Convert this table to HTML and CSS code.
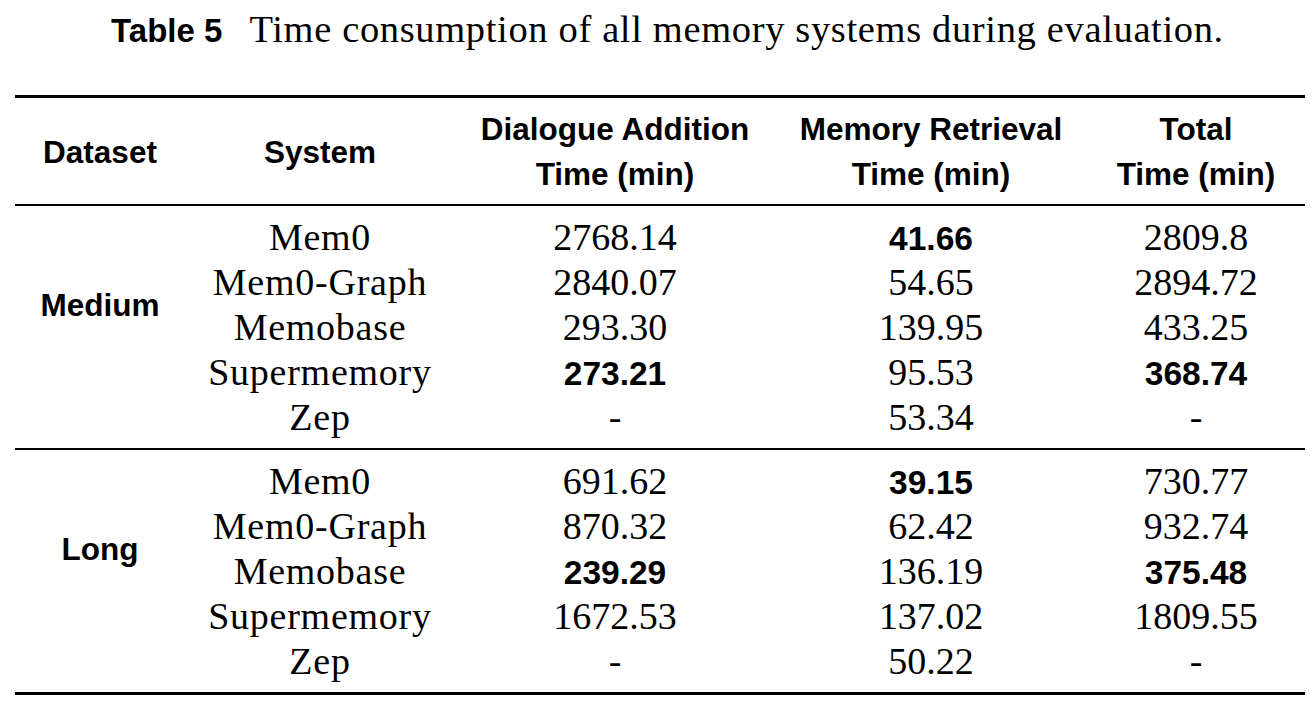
FILE: index.html
```html
<!DOCTYPE html>
<html lang="en">
<head>
<meta charset="utf-8">
<title>Table 5</title>
<link rel="stylesheet" href="styles.css">
</head>
<body>
<div class="page">
  <div class="caption">
    <span class="cap-label">Table 5</span>
    <span class="cap-text">Time consumption of all memory systems during evaluation.</span>
  </div>
  <table class="results">
    <colgroup>
      <col class="c1"><col class="c2"><col class="c3"><col class="c4"><col class="c5">
    </colgroup>
    <thead>
      <tr>
        <th>Dataset</th>
        <th>System</th>
        <th>Dialogue Addition<br>Time (min)</th>
        <th>Memory Retrieval<br>Time (min)</th>
        <th>Total<br>Time (min)</th>
      </tr>
    </thead>
    <tbody class="group">
      <tr class="first">
        <td class="ds" rowspan="5">Medium</td>
        <td class="sys">Mem0</td>
        <td>2768.14</td>
        <td><b class="best">41.66</b></td>
        <td>2809.8</td>
      </tr>
      <tr>
        <td class="sys">Mem0-Graph</td>
        <td>2840.07</td>
        <td>54.65</td>
        <td>2894.72</td>
      </tr>
      <tr>
        <td class="sys">Memobase</td>
        <td>293.30</td>
        <td>139.95</td>
        <td>433.25</td>
      </tr>
      <tr>
        <td class="sys">Supermemory</td>
        <td><b class="best">273.21</b></td>
        <td>95.53</td>
        <td><b class="best">368.74</b></td>
      </tr>
      <tr class="last">
        <td class="sys">Zep</td>
        <td>-</td>
        <td>53.34</td>
        <td>-</td>
      </tr>
    </tbody>
    <tbody class="group second">
      <tr class="first">
        <td class="ds" rowspan="5">Long</td>
        <td class="sys">Mem0</td>
        <td>691.62</td>
        <td><b class="best">39.15</b></td>
        <td>730.77</td>
      </tr>
      <tr>
        <td class="sys">Mem0-Graph</td>
        <td>870.32</td>
        <td>62.42</td>
        <td>932.74</td>
      </tr>
      <tr>
        <td class="sys">Memobase</td>
        <td><b class="best">239.29</b></td>
        <td>136.19</td>
        <td><b class="best">375.48</b></td>
      </tr>
      <tr>
        <td class="sys">Supermemory</td>
        <td>1672.53</td>
        <td>137.02</td>
        <td>1809.55</td>
      </tr>
      <tr class="last">
        <td class="sys">Zep</td>
        <td>-</td>
        <td>50.22</td>
        <td>-</td>
      </tr>
    </tbody>
  </table>
</div>
</body>
</html>
```

FILE: styles.css
```css
html, body {
  margin: 0;
  padding: 0;
  background: #ffffff;
  color: #000000;
}

.page {
  width: 1314px;
  padding-top: 7px;
}

.caption {
  display: flex;
  justify-content: center;
  align-items: baseline;
  gap: 27px;
  padding-left: 21px;
  height: 45px;
  line-height: 45px;
}

.cap-label {
  font-family: "Liberation Sans", Arial, sans-serif;
  font-weight: bold;
  font-size: 33px;
  line-height: 1;
}

.cap-text {
  font-family: "Liberation Serif", "Times New Roman", serif;
  font-size: 38.5px;
  letter-spacing: 0.65px;
}

.results {
  margin-top: 43px;
  margin-left: 15px;
  width: 1290px;
  table-layout: fixed;
  border-collapse: separate;
  border-spacing: 0;
}

.c1 { width: 170px; }
.c2 { width: 270px; }
.c3 { width: 320px; }
.c4 { width: 312px; }
.c5 { width: 218px; }

.results th {
  font-family: "Liberation Sans", Arial, sans-serif;
  font-weight: bold;
  font-size: 31.5px;
  line-height: 45px;
  text-align: center;
  vertical-align: middle;
  padding: 9px 0 7px;
  border-top: 3px solid #000;
  border-bottom: 2px solid #000;
}

.results td {
  font-family: "Liberation Serif", "Times New Roman", serif;
  font-size: 38px;
  line-height: 45px;
  text-align: center;
  vertical-align: baseline;
  padding: 0;
  white-space: nowrap;
}

.results td.sys {
  letter-spacing: 0.75px;
}

.results tr.first td {
  padding-top: 9px;
}

.results tr.last td {
  padding-bottom: 8px;
}

.results .second tr.first td {
  border-top: 2px solid #000;
}

.results .second tr.last td,
.results .second td.ds {
  border-bottom: 3px solid #000;
}

.results td.ds {
  font-family: "Liberation Sans", Arial, sans-serif;
  font-weight: bold;
  font-size: 31.5px;
  vertical-align: middle;
  padding-top: 9px;
  padding-bottom: 53px;
}

.best {
  font-family: "Liberation Sans", Arial, sans-serif;
  font-weight: bold;
  font-size: 33.5px;
  line-height: 1;
}
```
